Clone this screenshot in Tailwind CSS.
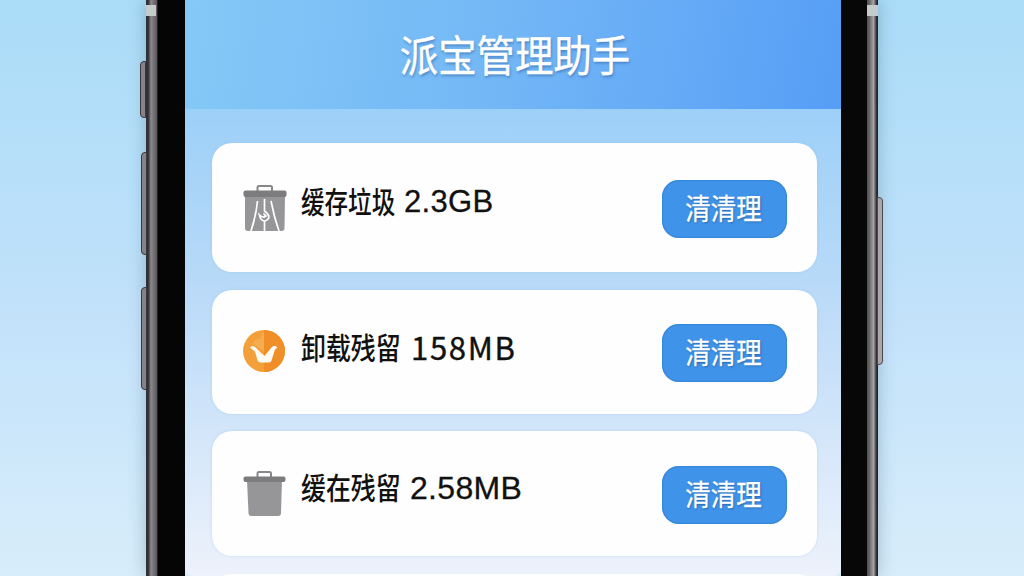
<!DOCTYPE html>
<html lang="zh-CN">
<head>
<meta charset="utf-8">
<title>派宝管理助手</title>
<script src="https://cdn.jsdelivr.net/npm/@tailwindcss/browser@4"></script>
</head>
<body class="w-[1024px] h-[576px] overflow-hidden font-['Noto_Sans_CJK_SC',sans-serif] bg-linear-to-b from-[#aadcf8] via-[#c0e1fa] via-50% to-[#d8edfb]">
<main class="flex h-[576px] justify-center">
  <div class="relative flex h-full w-[732px] shadow-[0_0_16px_rgba(75,110,130,0.4)]">
    <!-- left metal rail and bezel -->
    <div class="h-full w-[11px] bg-linear-to-r from-[#303036] from-20% via-[#8d898d] via-45% to-[#59575b]"></div>
    <div class="h-full w-[28px] border-l border-[#222] bg-[#050505]"></div>

    <section class="flex h-full w-[656px] flex-col rounded-b-lg bg-linear-to-b from-[#9dd0f8] from-19% via-[#b9daf8] via-50% to-[#edf2fb]">
      <header class="flex h-[109px] shrink-0 items-start justify-center bg-linear-[100deg] from-[#85c9f7] via-[#72b6f6] to-[#569ef6] pt-[23px] pl-[4px]">
        <h1 class="scale-x-[0.893] text-[43px] leading-[60px] font-normal whitespace-nowrap text-white text-shadow-[1px_2px_3px_rgba(35,85,150,0.5)] [-webkit-text-stroke:0.4px_white]">派宝管理助手</h1>
      </header>

      <div class="flex flex-col pt-[34px] pr-[24px] pl-[27px]">
        <article class="mb-[18px] flex h-[129px] items-start rounded-[20px] bg-[#fefefe] pl-[31px] pr-[30px] shadow-[0_0_3px_rgba(130,180,220,0.35)]">
          <svg class="mt-[41px] h-[48px] w-[44px] shrink-0" viewBox="0 0 44 48">
            <path d="M14.500 7V3.500q0-1.500 1.500-1.500H27.500q1.500 0 1.500 1.500V7" fill="none" stroke="#88888a" stroke-width="2"/>
            <path d="M2 12H42L41.500 44q0 3-3 3H5q-3 0-3-3Z" fill="#969698"/>
            <rect x="0.500" y="6.500" width="43" height="6.500" rx="2" fill="#7c7c7e"/>
            <path d="M14.500 17Q13 32 8 47M28 17Q31 33 36 47M21.500 37V47" fill="none" stroke="#fff" stroke-width="1.700"/>
            <path d="M21.500 15V27Q27 31 25.500 34.500Q21.500 39.500 17.500 34.500L16.500 31Q20 34.500 23 32L20.500 29.500" fill="none" stroke="#fff" stroke-width="1.700"/>
          </svg>
          <div class="mt-[36px] ml-[14px] flex h-[46px] w-[240px] items-center whitespace-nowrap text-[#111]">
            <span class="w-[103px] shrink-0 pb-[5px]"><span class="inline-block origin-left scale-x-[0.785] text-[30px] leading-[46px] font-medium">缓存垃圾</span></span>
            <span class="font-['Liberation_Sans',sans-serif] text-[31px] leading-[46px] tracking-[0.3px] [-webkit-text-stroke:0.3px_#111]">2.3GB</span>
          </div>
          <button class="mt-[37px] ml-auto flex h-[58px] w-[125px] items-center justify-center rounded-[17px] bg-[#3f93e9] pr-[2px] pb-[2px] text-white shadow-[inset_0_0_2px_#1767b3]"><span class="scale-x-[0.88] text-[29px] whitespace-nowrap text-shadow-[1px_1px_2px_rgba(20,70,130,0.6)] [-webkit-text-stroke:0.3px_white]">清清理</span></button>
        </article>

        <article class="mb-[17px] flex h-[124px] items-start rounded-[20px] bg-[#fefefe] pl-[31px] pr-[30px] shadow-[0_0_3px_rgba(130,180,220,0.35)]">
          <svg class="mt-[39px] h-[44px] w-[44px] shrink-0" viewBox="0 0 44 44">
            <circle cx="21" cy="22" r="21" fill="#f3a03a"/>
            <path d="M21 1A21 21 0 0 1 21 43Z" fill="#f08f27"/>
            <path d="M21 1V22L10 15Q12 9 17 10Z" fill="#f6ad4f"/>
            <path d="M7 18.500Q9.500 15.500 12.500 18.500L21.500 27L28.500 18.500Q31.500 15 34.500 18.500L32 20.500L28.500 31.500Q28 33.500 26 33.500H17.500Q15.500 33.500 14.500 31.500L12 22.500Z" fill="#fffaf4"/>
          </svg>
          <div class="mt-[35px] ml-[14px] flex h-[46px] w-[240px] items-center whitespace-nowrap text-[#111]">
            <span class="w-[110px] shrink-0 pb-[4px]"><span class="inline-block origin-left scale-x-[0.83] text-[30px] leading-[46px] font-medium">卸载残留</span></span>
            <span class="pb-[3px] text-[31px] leading-[46px] tracking-[1.7px] [-webkit-text-stroke:0.4px_#111]">158MB</span>
          </div>
          <button class="mt-[34px] ml-auto flex h-[58px] w-[125px] items-center justify-center rounded-[17px] bg-[#3f93e9] pr-[2px] pb-[2px] text-white shadow-[inset_0_0_2px_#1767b3]"><span class="scale-x-[0.88] text-[29px] whitespace-nowrap text-shadow-[1px_1px_2px_rgba(20,70,130,0.6)] [-webkit-text-stroke:0.3px_white]">清清理</span></button>
        </article>

        <article class="mb-[18px] flex h-[125px] items-start rounded-[20px] bg-[#fefefe] pl-[31px] pr-[30px] shadow-[0_0_3px_rgba(130,180,220,0.35)]">
          <svg class="mt-[38px] h-[48px] w-[44px] shrink-0" viewBox="0 0 44 48">
            <path d="M14.500 8V4.500q0-1.500 1.500-1.500H26.500q1.500 0 1.500 1.500V8" fill="none" stroke="#88888a" stroke-width="2"/>
            <path d="M4 11H39L38 44q0 3-3 3H8.500q-3 0-3-3Z" fill="#969698"/>
            <rect x="0.500" y="7.500" width="42" height="5.500" rx="2" fill="#7c7c7e"/>
          </svg>
          <div class="mt-[34px] ml-[14px] flex h-[46px] w-[240px] items-center whitespace-nowrap text-[#111]">
            <span class="w-[109px] shrink-0 pb-[5px]"><span class="inline-block origin-left scale-x-[0.83] text-[30px] leading-[46px] font-medium">缓在残留</span></span>
            <span class="font-['Liberation_Sans',sans-serif] text-[32px] leading-[46px] tracking-[0.3px] [-webkit-text-stroke:0.3px_#111]">2.58MB</span>
          </div>
          <button class="mt-[35px] ml-auto flex h-[58px] w-[125px] items-center justify-center rounded-[17px] bg-[#3f93e9] pr-[2px] pb-[2px] text-white shadow-[inset_0_0_2px_#1767b3]"><span class="scale-x-[0.88] text-[29px] whitespace-nowrap text-shadow-[1px_1px_2px_rgba(20,70,130,0.6)] [-webkit-text-stroke:0.3px_white]">清清理</span></button>
        </article>
        <div class="h-[20px] rounded-t-[20px] bg-[#fefefe]"></div>
      </div>
    </section>

    <div class="h-full w-[26px] bg-[#070708]"></div>
    <div class="h-full w-[11px] bg-linear-to-r from-[#555] from-10% via-[#aaa4a6] via-60% to-[#252529] to-90%"></div>

    <!-- hardware keys and antenna bands -->
    <div class="absolute top-[61px] -left-[6px] h-[57px] w-[6px] rounded-l-sm border border-[#38383d] bg-[#858389]"></div>
    <div class="absolute top-[152px] -left-[5px] h-[103px] w-[6px] rounded-l-sm border border-[#38383d] bg-[#858389]"></div>
    <div class="absolute top-[287px] -left-[5px] h-[103px] w-[6px] rounded-l-sm border border-[#38383d] bg-[#858389]"></div>
    <div class="absolute top-[197px] -right-[5px] h-[168px] w-[6px] rounded-r-sm border border-[#4a494e] bg-[#aaa6ac]"></div>
    <div class="absolute top-[5px] left-0 h-[11px] w-[10px] bg-[#c5cbcb]"></div>
    <div class="absolute top-[5px] right-0 h-[11px] w-[11px] bg-[#c5cbcb]"></div>
  </div>
</main>
</body>
</html>
